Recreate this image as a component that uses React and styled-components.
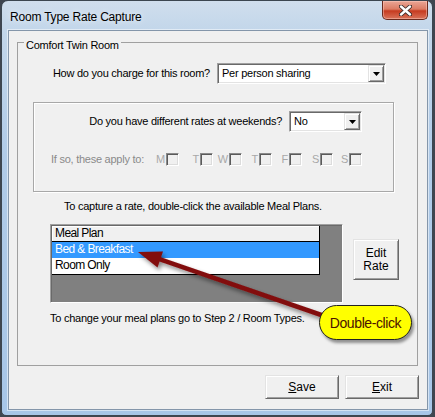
import styled, { createGlobalStyle } from "styled-components";

const GlobalStyle = createGlobalStyle`
  html, body {
    margin: 0;
    padding: 0;
  }
  body {
    width: 435px;
    height: 417px;
    overflow: hidden;
    background: #3f4650;
    font-family: "Liberation Sans", Arial, sans-serif;
  }
`;

const Page = styled.div`
  position: relative;
  width: 435px;
  height: 417px;
`;

const Window = styled.div`
  margin-left: 1px;
  width: 432px;
  height: 416px;
  box-sizing: border-box;
  border: 1px solid #3c4650;
  border-radius: 7px 7px 5px 5px;
  background: linear-gradient(to bottom, #d0deed 0px, #c2d6ea 30px, #b0cbe8 160px, #a7c6e8 100%);
  display: flex;
  flex-direction: column;
`;

const TitleBar = styled.div`
  height: 29px;
  display: flex;
  align-items: flex-start;
  justify-content: space-between;
  padding-left: 8px;
`;

const TitleText = styled.span`
  margin-top: 9px;
  font-size: 12px;
  line-height: 14px;
  letter-spacing: -0.2px;
  color: #000;
  text-shadow: 0 0 6px rgba(255, 255, 255, 0.9);
`;

const CloseButton = styled.div`
  margin-right: 4px;
  width: 46px;
  height: 19px;
  box-sizing: border-box;
  border: 1px solid #6a2a1e;
  border-top: none;
  border-radius: 0 0 5px 5px;
  background: linear-gradient(to bottom, #eaa696 0%, #dc7c64 45%, #c63b20 55%, #d9735a 100%);
  box-shadow: inset 0 0 0 1px rgba(255, 210, 200, 0.45);
  display: flex;
  align-items: center;
  justify-content: center;
`;

const ClientWrap = styled.div`
  flex: 1;
  display: flex;
  padding: 0 4px 5px 6px;
`;

const Client = styled.div`
  flex: 1;
  box-sizing: border-box;
  border: 1px solid #8496aa;
  box-shadow: 0 0 0 1px rgba(255, 255, 255, 0.5);
  background: #f0f0f0;
  display: flex;
  flex-direction: column;
  font-size: 11px;
  letter-spacing: -0.25px;
  color: #000;
`;

const GroupBox = styled.fieldset`
  flex: 1;
  min-width: 0;
  margin: 2px 9px 0 8px;
  padding: 0;
  border: 1px solid #a0a0a0;
  display: flex;
  flex-direction: column;
`;

const Legend = styled.legend`
  margin-left: 6px;
  padding: 6px 2px 0 2px;
  line-height: 13px;
  height: 13px;
  font-size: 11px;
`;

const Row = styled.div`
  display: flex;
  align-items: center;
  justify-content: flex-end;
  gap: 7px;
  padding-right: 31px;
  margin-top: ${(p) => p.$top}px;
`;

const Label = styled.span`
  line-height: 13px;
  white-space: nowrap;
`;

const Combo = styled.div`
  width: ${(p) => p.$w}px;
  height: 21px;
  box-sizing: border-box;
  border: 1px solid;
  border-color: #a0a0a0 #ffffff #ffffff #a0a0a0;
  box-shadow: inset 1px 1px 0 #696969, inset -1px -1px 0 #e3e3e3;
  background: #fff;
  display: flex;
  align-items: center;
  padding: 1px 1px 1px 4px;
`;

const ComboText = styled.span`
  flex: 1;
  line-height: 13px;
  white-space: nowrap;
`;

const DropButton = styled.div`
  width: 16px;
  height: 17px;
  box-sizing: border-box;
  border: 1px solid;
  border-color: #e3e3e3 #696969 #696969 #e3e3e3;
  box-shadow: inset 1px 1px 0 #fff, inset -1px -1px 0 #a0a0a0;
  background: #f0f0f0;
  display: flex;
  align-items: center;
  justify-content: center;
`;

const InnerFrame = styled.div`
  margin: 18px 0 0 15px;
  width: 361px;
  height: 90px;
  box-sizing: border-box;
  border: 1px solid #a8a8a8;
  box-shadow: inset 1px 1px 0 #fff, 1px 1px 0 #fff;
  display: flex;
  flex-direction: column;
  padding-top: 8px;
`;

const DaysRow = styled.div`
  display: flex;
  align-items: center;
  margin-top: 21px;
  padding-left: 17px;
  color: #8a8a8a;
`;

const DaysLabel = styled.span`
  width: 98px;
  line-height: 13px;
  white-space: nowrap;
`;

const DayItem = styled.div`
  width: ${(p) => p.$w}px;
  display: flex;
  align-items: center;
  justify-content: flex-end;
  gap: 1px;
  color: #a8a8a8;
`;

const DayLetter = styled.span`
  line-height: 13px;
`;

const CheckBox = styled.div`
  width: 13px;
  height: 13px;
  box-sizing: border-box;
  border: 1px solid;
  border-color: #8a8a8a #ffffff #ffffff #8a8a8a;
  box-shadow: inset 1px 1px 0 #5a5a5a, inset -1px -1px 0 #dcdcdc;
  background: #f0f0f0;
`;

const Hint = styled.div`
  margin-top: ${(p) => p.$top}px;
  padding-left: ${(p) => p.$left}px;
  line-height: 13px;
  white-space: nowrap;
`;

const ListRow = styled.div`
  display: flex;
  align-items: flex-start;
  gap: 10px;
  margin: 11px 0 0 32px;
`;

const ListArea = styled.div`
  width: 293px;
  height: 79px;
  box-sizing: border-box;
  border: 1px solid;
  border-color: #a0a0a0 #ffffff #ffffff #a0a0a0;
  box-shadow: inset 1px 1px 0 #696969;
  background: #808080;
  padding: 1px 0 0 1px;
`;

const Grid = styled.div`
  width: 268px;
  box-sizing: border-box;
  border-right: 1px solid #000;
  border-bottom: 1px solid #000;
  font-size: 12px;
  letter-spacing: -0.6px;
`;

const GridRow = styled.div`
  height: 16px;
  box-sizing: border-box;
  padding-left: 3px;
  line-height: 15px;
  white-space: nowrap;
  background: ${(p) => (p.$kind === "head" ? "#f0f0f0" : p.$kind === "selected" ? "#3399ff" : "#ffffff")};
  color: ${(p) => (p.$kind === "selected" ? "#ffffff" : "#000000")};
  border-bottom: ${(p) => (p.$kind === "head" ? "1px solid #000" : "none")};
  box-shadow: ${(p) => (p.$kind === "head" ? "inset 1px 1px 0 #fff" : "none")};
`;

const Button = styled.div`
  width: ${(p) => p.$w}px;
  height: ${(p) => p.$h}px;
  margin-top: ${(p) => p.$top || 0}px;
  box-sizing: border-box;
  border: 1px solid;
  border-color: #e3e3e3 #696969 #696969 #e3e3e3;
  box-shadow: inset 1px 1px 0 #fff, inset -1px -1px 0 #a0a0a0;
  background: #f0f0f0;
  display: flex;
  align-items: center;
  justify-content: center;
  text-align: center;
  font-size: 12px;
  line-height: 13px;
  letter-spacing: 0;
`;

const ButtonBar = styled.div`
  display: flex;
  justify-content: flex-end;
  gap: 6px;
  padding: 9px 8px 10px 0;
`;

const Callout = styled.div`
  position: absolute;
  left: 319px;
  top: 305px;
  width: 93px;
  height: 35px;
  box-sizing: border-box;
  border: 1.5px solid #222;
  border-radius: 18px;
  background: #ffff00;
  box-shadow: 2px 3px 3px rgba(0, 0, 0, 0.4);
  display: flex;
  align-items: center;
  justify-content: center;
  font-size: 14px;
  letter-spacing: -0.4px;
  color: #4a1200;
`;

const ArrowLayer = styled.svg`
  position: absolute;
  left: 0;
  top: 0;
  pointer-events: none;
`;

const days = [
  ["M", 30],
  ["T", 34],
  ["W", 29],
  ["T", 30],
  ["F", 30],
  ["S", 31],
  ["S", 29],
];

function DropArrow() {
  return (
    <svg width="7" height="4" viewBox="0 0 7 4">
      <polygon points="0,0 7,0 3.5,4" fill="#000" />
    </svg>
  );
}

export default function App() {
  return (
    <>
      <GlobalStyle />
      <Page>
        <Window>
          <TitleBar>
            <TitleText>Room Type Rate Capture</TitleText>
            <CloseButton>
              <svg width="13" height="11" viewBox="0 0 13 11">
                <path d="M2 1.5 L11 9.5 M11 1.5 L2 9.5" stroke="#3a2a28" strokeWidth="4.2" strokeLinecap="round" />
                <path d="M2 1.5 L11 9.5 M11 1.5 L2 9.5" stroke="#ffffff" strokeWidth="2.4" strokeLinecap="round" />
              </svg>
            </CloseButton>
          </TitleBar>
          <ClientWrap>
            <Client>
              <GroupBox>
                <Legend>Comfort Twin Room</Legend>
                <Row $top={11}>
                  <Label>How do you charge for this room?</Label>
                  <Combo $w={169}>
                    <ComboText>Per person sharing</ComboText>
                    <DropButton>
                      <DropArrow />
                    </DropButton>
                  </Combo>
                </Row>
                <InnerFrame>
                  <Row $top={0}>
                    <Label>Do you have different rates at weekends?</Label>
                    <Combo $w={73}>
                      <ComboText>No</ComboText>
                      <DropButton>
                        <DropArrow />
                      </DropButton>
                    </Combo>
                  </Row>
                  <DaysRow>
                    <DaysLabel>If so, these apply to:</DaysLabel>
                    {days.map(([d, w], i) => (
                      <DayItem key={i} $w={w}>
                        <DayLetter>{d}</DayLetter>
                        <CheckBox />
                      </DayItem>
                    ))}
                  </DaysRow>
                </InnerFrame>
                <Hint $top={8} $left={46}>
                  To capture a rate, double-click the available Meal Plans.
                </Hint>
                <ListRow>
                  <ListArea>
                    <Grid>
                      <GridRow $kind="head">Meal Plan</GridRow>
                      <GridRow $kind="selected">Bed &amp; Breakfast</GridRow>
                      <GridRow>Room Only</GridRow>
                    </Grid>
                  </ListArea>
                  <Button $w={46} $h={41} $top={15}>
                    Edit
                    <br />
                    Rate
                  </Button>
                </ListRow>
                <Hint $top={9} $left={32}>
                  To change your meal plans go to Step 2 / Room Types.
                </Hint>
              </GroupBox>
              <ButtonBar>
                <Button $w={74} $h={24}>
                  <span>
                    <u>S</u>ave
                  </span>
                </Button>
                <Button $w={74} $h={24}>
                  <span>
                    <u>E</u>xit
                  </span>
                </Button>
              </ButtonBar>
            </Client>
          </ClientWrap>
        </Window>
        <ArrowLayer width="435" height="417" viewBox="0 0 435 417">
          <defs>
            <filter id="arrowShadow" x="-20%" y="-20%" width="140%" height="140%">
              <feDropShadow dx="2" dy="3" stdDeviation="2" floodColor="#000" floodOpacity="0.45" />
            </filter>
          </defs>
          <g filter="url(#arrowShadow)">
            <line x1="330" y1="318" x2="158" y2="258.6" stroke="#820c0c" strokeWidth="4.5" />
            <polygon points="138,252 163,251.5 157.5,267.5" fill="#820c0c" />
          </g>
        </ArrowLayer>
        <Callout>Double-click</Callout>
      </Page>
    </>
  );
}
